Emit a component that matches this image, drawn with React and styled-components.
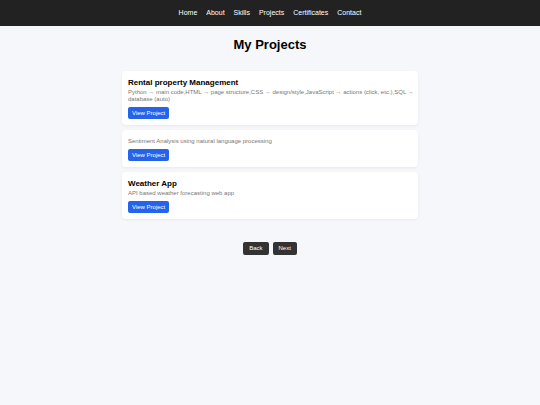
import React from "react";
import styled, { createGlobalStyle } from "styled-components";

const GlobalStyle = createGlobalStyle`
  * { box-sizing: border-box; }
  body {
    margin: 0;
    background: #f5f7fb;
    color: #000;
    font-family: "Liberation Sans", Arial, sans-serif;
  }
`;

const Nav = styled.nav`
  display: flex;
  justify-content: center;
  gap: 9px;
  padding: 9px;
  background: #222;
`;

const NavLink = styled.a`
  color: #fff;
  font-size: 7px;
  line-height: 8px;
  text-decoration: none;
`;

const Main = styled.main`
  display: flex;
  flex-direction: column;
  align-items: center;
  padding: 10px 16px;
`;

const Title = styled.h1`
  margin: 0 0 17px;
  font-size: 13px;
  line-height: 18px;
`;

const ProjectList = styled.div`
  display: flex;
  flex-direction: column;
  gap: 5px;
  width: 100%;
  max-width: 296px;
`;

const Card = styled.article`
  padding: 6px 2px 6px 6px;
  background: #fff;
  border-radius: 4px;
  box-shadow: 0 1px 3px rgba(0, 0, 0, 0.06);
`;

const CardTitle = styled.h2`
  margin: 0 0 1px;
  font-size: 8px;
  line-height: 11px;
`;

const Description = styled.p`
  margin: 0 0 4px;
  padding-top: ${({ $untitled }) => ($untitled ? "2px" : "0")};
  color: #777;
  font-size: 6px;
  line-height: 7px;
`;

const ViewLink = styled.a`
  display: block;
  width: fit-content;
  padding: 2px 4px;
  border-radius: 2px;
  background: #2563eb;
  color: #fff;
  font-size: 6px;
  line-height: 8px;
  text-decoration: none;
`;

const Pager = styled.div`
  display: flex;
  gap: 4px;
  margin-top: 23px;
`;

const PagerButton = styled.button`
  padding: 3px 6px;
  border: 0;
  border-radius: 2px;
  background: #333;
  color: #fff;
  font-family: inherit;
  font-size: 6px;
  line-height: 7px;
  cursor: pointer;
`;

const links = ["Home", "About", "Skills", "Projects", "Certificates", "Contact"];

const projects = [
  {
    title: "Rental property Management",
    description:
      "Python → main code,HTML → page structure,CSS → design/style,JavaScript → actions (click, etc.),SQL → database (auto)",
  },
  { title: "", description: "Sentiment Analysis using natural language processing" },
  { title: "Weather App", description: "API based weather forecasting web app" },
];

export default function App() {
  return (
    <>
      <GlobalStyle />
      <Nav>
        {links.map((name) => (
          <NavLink key={name} href={`#${name.toLowerCase()}`}>{name}</NavLink>
        ))}
      </Nav>
      <Main>
        <Title>My Projects</Title>
        <ProjectList>
          {projects.map(({ title, description }) => (
            <Card key={description}>
              {title && <CardTitle>{title}</CardTitle>}
              <Description $untitled={!title}>{description}</Description>
              <ViewLink href="#project">View Project</ViewLink>
            </Card>
          ))}
        </ProjectList>
        <Pager>
          <PagerButton type="button">Back</PagerButton>
          <PagerButton type="button">Next</PagerButton>
        </Pager>
      </Main>
    </>
  );
}
